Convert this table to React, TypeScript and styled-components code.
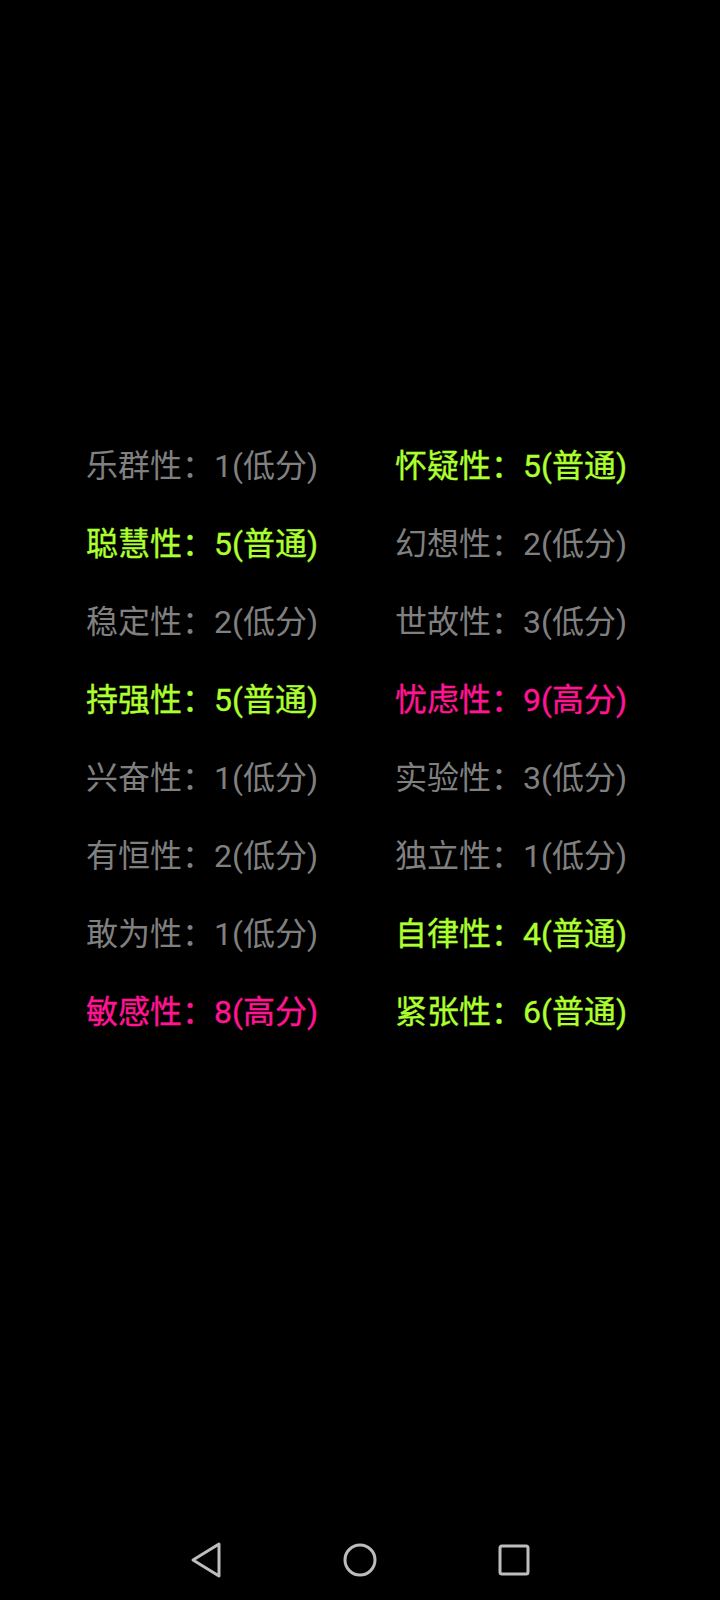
import React from "react";
import styled, { createGlobalStyle } from "styled-components";

const GlobalStyle = createGlobalStyle`
  html, body {
    margin: 0;
    padding: 0;
    background: #000;
  }
  body {
    font-family: Roboto, "Noto Sans CJK SC", sans-serif;
  }
`;

type Level = "low" | "normal" | "high";

const colors: Record<Level, string> = {
  low: "#808080",
  normal: "#adff2f",
  high: "#ff1493",
};

const Screen = styled.div`
  width: 720px;
  height: 1600px;
  background: #000;
  display: flex;
  flex-direction: column;
  overflow: hidden;
`;

const Content = styled.main`
  flex: 1;
  padding-top: 427px;
  padding-left: 86px;
`;

const Grid = styled.div`
  display: grid;
  grid-template-columns: 309px auto;
  grid-auto-rows: 78px;
`;

const Trait = styled.div<{ $level: Level }>`
  font-family: Roboto, "Noto Sans CJK SC", sans-serif;
  font-size: 32px;
  line-height: 78px;
  white-space: nowrap;
  font-weight: 400;
  -webkit-text-stroke: ${(p) => (p.$level === "low" ? "0" : "0.35px")} currentColor;
  color: ${(p) => colors[p.$level]};
`;

const NavBar = styled.nav`
  height: 80px;
  display: grid;
  grid-template-columns: 50px 50px 50px;
  justify-content: center;
  column-gap: 104px;
  align-items: center;
  justify-items: center;
`;

const NavIcon = styled.svg`
  display: block;
  color: #bdbdbd;
`;

const traits: { name: string; score: number; level: Level }[] = [
  { name: "乐群性", score: 1, level: "low" },
  { name: "怀疑性", score: 5, level: "normal" },
  { name: "聪慧性", score: 5, level: "normal" },
  { name: "幻想性", score: 2, level: "low" },
  { name: "稳定性", score: 2, level: "low" },
  { name: "世故性", score: 3, level: "low" },
  { name: "持强性", score: 5, level: "normal" },
  { name: "忧虑性", score: 9, level: "high" },
  { name: "兴奋性", score: 1, level: "low" },
  { name: "实验性", score: 3, level: "low" },
  { name: "有恒性", score: 2, level: "low" },
  { name: "独立性", score: 1, level: "low" },
  { name: "敢为性", score: 1, level: "low" },
  { name: "自律性", score: 4, level: "normal" },
  { name: "敏感性", score: 8, level: "high" },
  { name: "紧张性", score: 6, level: "normal" },
];

const label: Record<Level, string> = {
  low: "低分",
  normal: "普通",
  high: "高分",
};

export default function App() {
  return (
    <>
      <GlobalStyle />
      <Screen>
        <Content>
          <Grid>
            {traits.map((t) => (
              <Trait key={t.name} $level={t.level}>
                {t.name}：{t.score}({label[t.level]})
              </Trait>
            ))}
          </Grid>
        </Content>
        <NavBar>
          <NavIcon width="40" height="40" viewBox="0 0 40 40">
            <path
              d="M33 4 L7 20 L33 36 Z"
              fill="none"
              stroke="currentColor"
              strokeWidth="3"
              strokeLinejoin="round"
            />
          </NavIcon>
          <NavIcon width="40" height="40" viewBox="0 0 40 40">
            <circle cx="20" cy="20" r="15" fill="none" stroke="currentColor" strokeWidth="3" />
          </NavIcon>
          <NavIcon width="40" height="40" viewBox="0 0 40 40">
            <rect x="6" y="6" width="28" height="28" rx="2" fill="none" stroke="currentColor" strokeWidth="3" />
          </NavIcon>
        </NavBar>
      </Screen>
    </>
  );
}
